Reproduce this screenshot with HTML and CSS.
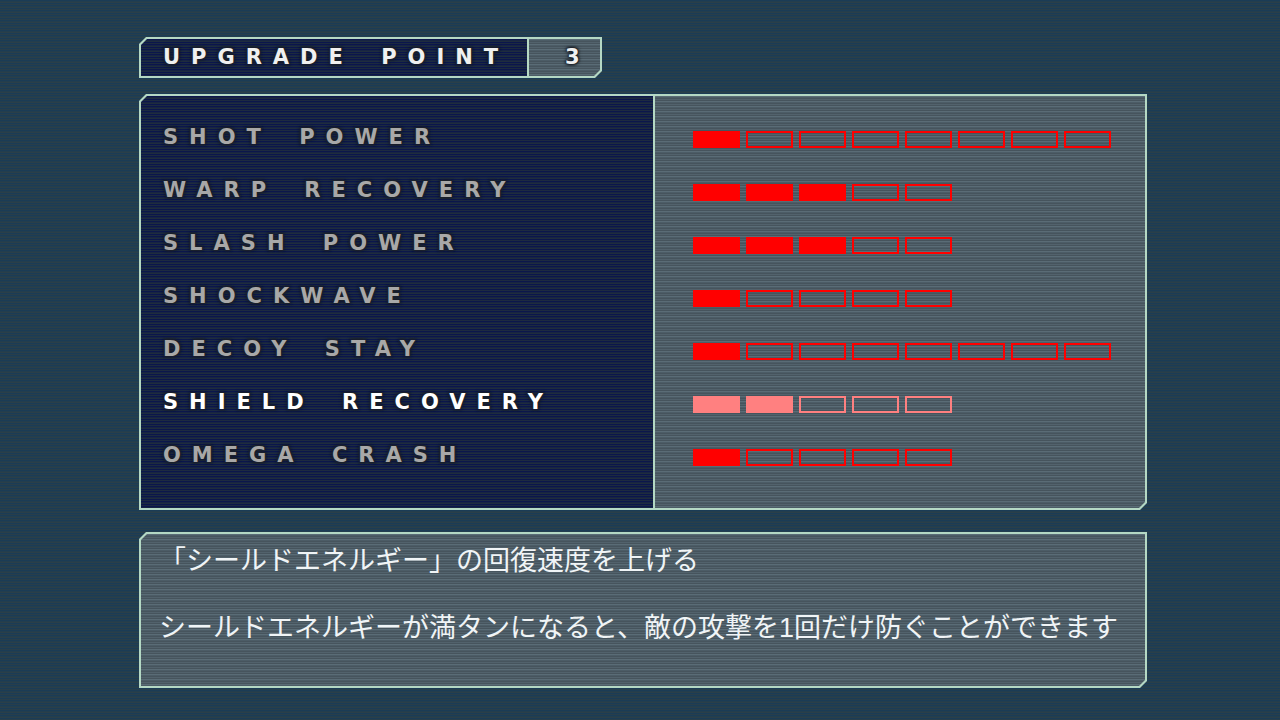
FILE: index.html
```html
<!DOCTYPE html>
<html lang="ja">
<head>
  <meta charset="UTF-8" />
  <meta name="viewport" content="width=device-width, initial-scale=1.0"/>
  <title>Upgrade</title>
  <link rel="stylesheet" href="styles.css">
</head>
<body>
  <main class="screen">
    <header class="frame points">
      <h1 class="cell navy first points-title">UPGRADE POINT</h1>
      <div class="cell steel last points-value">3</div>
    </header>

    <section class="frame upgrades">
      <ul class="cell navy first names" id="names"></ul>
      <ul class="cell steel last meters" id="meters"></ul>
    </section>

    <section class="frame">
      <div class="cell steel first last description">
        <p>「シールドエネルギー」の回復速度を上げる</p>
        <p>シールドエネルギーが満タンになると、敵の攻撃を1回だけ防ぐことができます</p>
      </div>
    </section>
  </main>

  <script>
    const upgrades = [
      { name: "SHOT POWER", level: 1, max: 8 },
      { name: "WARP RECOVERY", level: 3, max: 5 },
      { name: "SLASH POWER", level: 3, max: 5 },
      { name: "SHOCKWAVE", level: 1, max: 5 },
      { name: "DECOY STAY", level: 1, max: 8 },
      { name: "SHIELD RECOVERY", level: 2, max: 5 },
      { name: "OMEGA CRASH", level: 1, max: 5 }
    ];
    let selected = 5;

    function render() {
      const names = document.getElementById("names");
      const meters = document.getElementById("meters");
      names.innerHTML = "";
      meters.innerHTML = "";
      upgrades.forEach((u, i) => {
        const active = i === selected ? " active" : "";

        const item = document.createElement("li");
        const button = document.createElement("button");
        button.type = "button";
        button.className = "name" + active;
        button.textContent = u.name;
        button.onclick = () => { selected = i; render(); };
        item.appendChild(button);
        names.appendChild(item);

        const meter = document.createElement("li");
        meter.className = "meter" + active;
        for (let p = 0; p < u.max; p++) {
          const pip = document.createElement("span");
          pip.className = p < u.level ? "pip full" : "pip";
          meter.appendChild(pip);
        }
        meters.appendChild(meter);
      });
    }

    render();
  </script>
</body>
</html>
```
FILE: styles.css
```css
* {
  box-sizing: border-box;
}
body {
  margin: 0;
  min-height: 100vh;
  background: repeating-linear-gradient(#1b3c56 0 1px, #233e4e 1px 2px, #2a3f49 2px 3px, #1b3c56 3px 4px, #283e4a 4px 5px);
  font-family: "DejaVu Sans", sans-serif;
}
h1, ul, p {
  margin: 0;
  padding: 0;
}
ul {
  list-style: none;
}
.screen {
  padding: 37px 133px 32px 139px;
}

/* frames with the top left and bottom right corners cut off */
.frame {
  display: grid;
  gap: 2px;
  padding: 2px;
  background: #b4d8c4;
  clip-path: polygon(7px 0, 100% 0, 100% calc(100% - 7px), calc(100% - 7px) 100%, 0 100%, 0 7px);
}
.cell {
  --tl: 0px;
  --br: 0px;
  clip-path: polygon(var(--tl) 0, 100% 0, 100% calc(100% - var(--br)), calc(100% - var(--br)) 100%, 0 100%, 0 var(--tl));
}
.first {
  --tl: 6px;
}
.last {
  --br: 6px;
}
.navy {
  background: repeating-linear-gradient(#0b164c 0 1px, #172443 1px 2px, #1e2c3e 2px 3px, #0b164c 3px 4px, #1c2a3f 4px 5px);
}
.steel {
  background: repeating-linear-gradient(#5a6c76 0 1px, #4c5c66 1px 2px, #46545d 2px 3px, #52626c 3px 4px, #46545d 4px 5px);
}

.points-title, .points-value, .name {
  font-family: "DejaVu Sans", sans-serif;
  font-size: 21px;
  font-weight: bold;
  line-height: 37px;
  letter-spacing: 11px;
  word-spacing: 9px;
  color: #f0f0f0;
  text-shadow: 0 0 2px #1c2028, 0 0 2px #1c2028, 0 0 3px #1c2028, 0 0 3px #1c2028, 0 0 4px #1c2028;
}
.points {
  width: max-content;
  grid-template-columns: 386px 71px;
}
.points-title {
  padding-left: 22px;
  white-space: nowrap;
}
.points-value {
  padding-left: 36px;
}

.upgrades {
  grid-template-columns: 51% 1fr;
  margin: 16px 0 22px;
}
.names {
  padding: 15px 22px 26px;
}
.names li {
  height: 53px;
}
.name {
  height: 53px;
  padding: 0;
  border: none;
  background: none;
  color: #a8a8a8;
  white-space: nowrap;
  cursor: pointer;
}
.name.active {
  color: #fff;
}
.meters {
  padding: 17px 24px 24px 38px;
}
.meter {
  display: flex;
  align-items: center;
  gap: 6px;
  height: 53px;
  color: #f00;
}
.meter.active {
  color: #ff8080;
}
.pip {
  width: 47px;
  height: 17px;
  border: 2px solid;
}
.pip.full {
  background: currentColor;
}

.description {
  display: grid;
  gap: 27px;
  padding: 7px 18px 38px;
  font-family: "Liberation Sans", "Noto Sans CJK JP", sans-serif;
  font-size: 27px;
  line-height: 40px;
  color: #f0f4f6;
}
```
